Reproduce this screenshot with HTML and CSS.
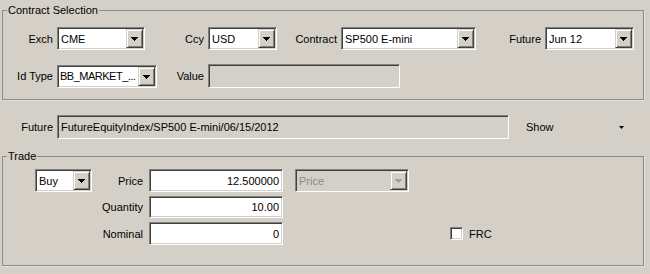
FILE: index.html
```html
<!DOCTYPE html>
<html>
<head>
<meta charset="utf-8">
<link rel="stylesheet" href="styles.css">
</head>
<body>
<fieldset class="group group-contract">
  <legend>Contract Selection</legend>
  <div class="row row-1">
    <label class="lbl w-exch">Exch</label>
    <div class="combo w-88"><span class="val">CME</span><span class="btn"><svg width="7" height="4" viewBox="0 0 7 4"><path d="M0 0h7L3.5 4z"/></svg></span></div>
    <label class="lbl w-ccy">Ccy</label>
    <div class="combo w-69"><span class="val">USD</span><span class="btn"><svg width="7" height="4" viewBox="0 0 7 4"><path d="M0 0h7L3.5 4z"/></svg></span></div>
    <label class="lbl w-contract">Contract</label>
    <div class="combo w-135"><span class="val">SP500 E-mini</span><span class="btn"><svg width="7" height="4" viewBox="0 0 7 4"><path d="M0 0h7L3.5 4z"/></svg></span></div>
    <label class="lbl w-future">Future</label>
    <div class="combo w-89"><span class="val">Jun 12</span><span class="btn"><svg width="7" height="4" viewBox="0 0 7 4"><path d="M0 0h7L3.5 4z"/></svg></span></div>
  </div>
  <div class="row row-2">
    <label class="lbl w-exch">Id Type</label>
    <div class="combo w-100"><span class="val tight">BB_MARKET_...</span><span class="btn"><svg width="7" height="4" viewBox="0 0 7 4"><path d="M0 0h7L3.5 4z"/></svg></span></div>
    <label class="lbl w-value">Value</label>
    <div class="field disabled w-192 h-24"></div>
  </div>
</fieldset>

<div class="row row-future">
  <label class="lbl w-exch">Future</label>
  <div class="field disabled w-452 h-24"><span class="val">FutureEquityIndex/SP500 E-mini/06/15/2012</span></div>
  <div class="flat-combo"><span class="val">Show</span><svg width="5" height="3" viewBox="0 0 5 3"><path d="M0 0h5L2.5 3z"/></svg></div>
</div>

<fieldset class="group group-trade">
  <legend>Trade</legend>
  <div class="row trow trow-1">
    <div class="combo w-57 buy"><span class="val">Buy</span><span class="btn"><svg width="7" height="4" viewBox="0 0 7 4"><path d="M0 0h7L3.5 4z"/></svg></span></div>
    <label class="lbl w-price">Price</label>
    <div class="field w-134 h-23 num"><span class="val">12.500000</span></div>
    <div class="combo disabled w-114 pricetype"><span class="val">Price</span><span class="btn"><svg width="7" height="4" viewBox="0 0 7 4"><path d="M0 0h7L3.5 4z"/></svg></span></div>
  </div>
  <div class="row trow trow-2">
    <label class="lbl w-tlabel">Quantity</label>
    <div class="field w-134 h-22 num"><span class="val">10.00</span></div>
  </div>
  <div class="row trow trow-3">
    <label class="lbl w-tlabel">Nominal</label>
    <div class="field w-134 h-23 num"><span class="val">0</span></div>
    <label class="check"><span class="box"></span><span>FRC</span></label>
  </div>
</fieldset>
</body>
</html>
```
FILE: styles.css
```css
html, body {
  margin: 0;
  padding: 0;
}
body {
  width: 650px;
  height: 274px;
  overflow: hidden;
  background: #d4d0c8;
  font-family: "Liberation Sans", Arial, sans-serif;
  font-size: 11px;
  color: #000;
}
.group {
  margin: 0 6px 0 2px;
  padding: 0;
  border: 1px solid #8d8b86;
  box-shadow: 0 1px 0 #e4e2dc, 1px 0 0 #e4e2dc;
  min-width: 0;
}
.group legend {
  margin-left: 4px;
  padding: 0 1px;
  line-height: 13px;
  height: 13px;
}
.group-contract {
  margin-top: 4px;
  padding: 10px 0 11px 0;
}
.group-trade {
  margin-top: 11px;
  padding: 6px 0 0 0;
  height: 116px;
  box-sizing: border-box;
}
.row {
  display: flex;
  align-items: center;
}
.row-2 {
  margin-top: 14px;
}
.lbl {
  text-align: right;
  white-space: nowrap;
  padding-right: 4px;
  box-sizing: border-box;
}
.w-exch { width: 54px; }
.w-ccy { width: 63px; }
.w-contract { width: 64px; }
.w-future { width: 69px; }
.w-value { width: 51px; }
.w-price { width: 57px; padding-right: 6px; }
.w-tlabel { width: 146px; padding-right: 6px; }
.w-57 { width: 57px; }
.w-69 { width: 69px; }
.w-88 { width: 88px; }
.w-89 { width: 89px; }
.w-100 { width: 100px; }
.w-114 { width: 114px; }
.w-134 { width: 134px; }
.w-135 { width: 135px; }
.w-192 { width: 192px; }
.w-452 { width: 452px; }
.h-22 { height: 22px; }
.h-23 { height: 23px; }
.h-24 { height: 24px; }

.combo, .field {
  box-sizing: border-box;
  background: #fff;
  border: 1px solid;
  border-color: #808080 #fff #fff #808080;
  box-shadow: inset 1px 1px 0 #404040, inset -1px -1px 0 #d4d0c8;
  display: flex;
  align-items: center;
}
.combo {
  height: 23px;
  padding: 1px;
}
.field {
  padding: 1px 1px 1px 1px;
}
.field.disabled, .combo.disabled {
  background: #d4d0c8;
}
.val {
  flex: 1;
  min-width: 0;
  padding-left: 2px;
  white-space: nowrap;
  overflow: hidden;
}
.val.tight {
  letter-spacing: -0.5px;
  padding-left: 1px;
}
.num .val {
  text-align: right;
  padding-right: 2px;
}
.combo.disabled .val {
  color: #8a8a8a;
}
.btn {
  flex: none;
  width: 17px;
  height: 19px;
  box-sizing: border-box;
  background: #d4d0c8;
  border: 1px solid;
  border-color: #d4d0c8 #404040 #404040 #d4d0c8;
  box-shadow: inset 1px 1px 0 #fff, inset -1px -1px 0 #808080;
  display: flex;
  align-items: center;
  justify-content: center;
}
.btn svg {
  display: block;
  fill: #000;
  shape-rendering: crispEdges;
  margin-top: 1px;
}
.combo.disabled .btn svg {
  fill: #a0a0a0;
}

.row-future {
  margin-top: 15px;
  padding-left: 3px;
}
.row-future .lbl {
  width: 54px;
}
.flat-combo {
  display: flex;
  align-items: center;
  width: 110px;
  margin-left: 11px;
  height: 24px;
}
.flat-combo .val {
  padding-left: 6px;
}
.flat-combo svg {
  display: block;
  fill: #000;
  margin-right: 6px;
}

.trow-1 {
  padding-left: 32px;
}
.trow-2 {
  margin-top: 4px;
}
.trow-3 {
  margin-top: 4px;
}
.pricetype {
  margin-left: 12px;
}
.check {
  display: flex;
  align-items: center;
  margin-left: 167px;
  gap: 6px;
}
.check .box {
  width: 13px;
  height: 13px;
  box-sizing: border-box;
  background: #fff;
  border: 1px solid;
  border-color: #808080 #fff #fff #808080;
  box-shadow: inset 1px 1px 0 #404040, inset -1px -1px 0 #d4d0c8;
}
```
